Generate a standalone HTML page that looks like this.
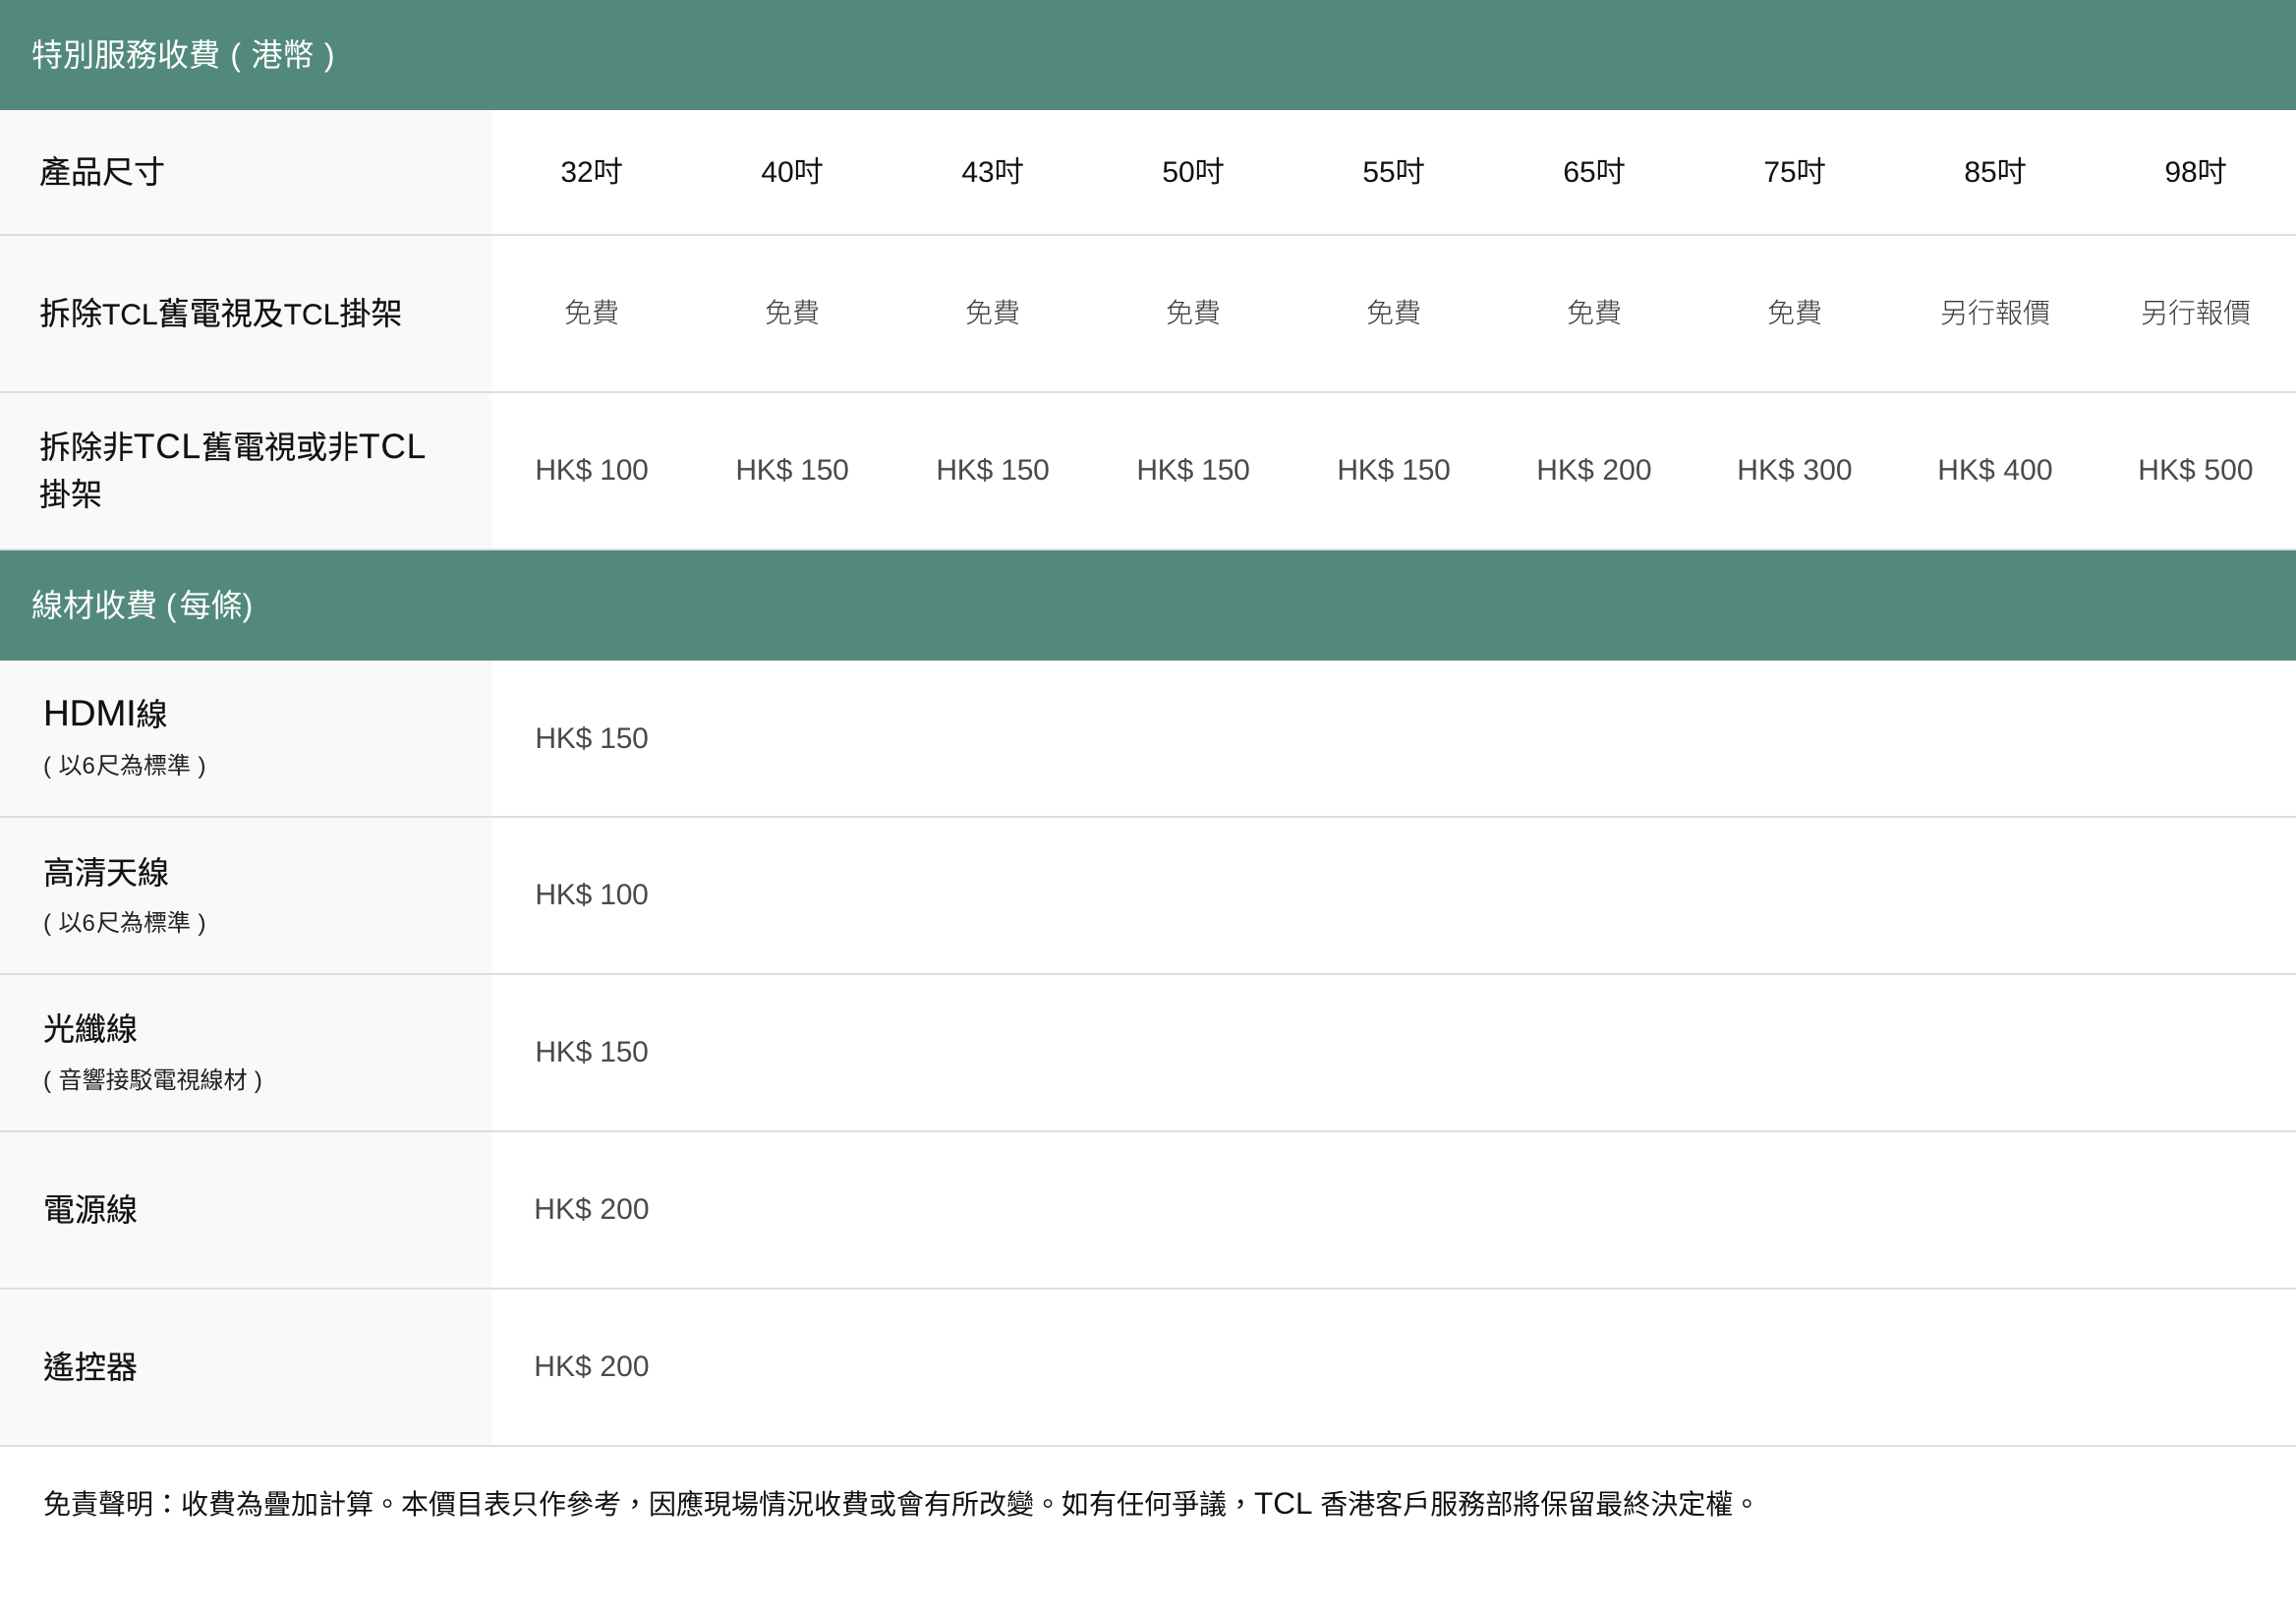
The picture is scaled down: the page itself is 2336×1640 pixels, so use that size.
<!DOCTYPE html>
<html lang="zh-Hant">
<head>
<meta charset="utf-8">
<title>特別服務收費</title>
<style>
html,body{margin:0;padding:0;background:#fff;}
body{width:2336px;height:1640px;overflow:hidden;position:relative;font-family:"Liberation Sans","Noto Sans CJK TC",sans-serif;color:#111;}
.band{position:absolute;left:0;width:2336px;height:112px;background:#52897b;color:#fff;font-size:32px;line-height:112px;}
.band span{position:absolute;left:32px;top:0;white-space:nowrap;}
.band b{font-weight:400;}
.side{position:absolute;left:0;width:500px;background:#f9f9f9;}
.line{position:absolute;left:0;width:2336px;height:2px;background:#dedede;}
.h{position:absolute;white-space:nowrap;font-size:32px;color:#111;line-height:48px;-webkit-text-stroke:.2px #111;}
.s{position:absolute;white-space:nowrap;font-size:24px;color:#222;line-height:36px;word-spacing:.8px;}
.c{position:absolute;width:204px;text-align:center;white-space:nowrap;}
.sz{font-size:30px;line-height:40px;color:#111;}
.fr{font-size:28px;line-height:40px;color:#3a3a3a;font-weight:300;}
.pr{font-size:30px;line-height:40px;color:#4a4a4a;font-weight:300;letter-spacing:-.2px;}
.w{letter-spacing:.1px;}
.foot{position:absolute;left:44px;top:1511px;font-size:28px;line-height:40px;color:#111;white-space:nowrap;}
.t1,.t2,.t3,.t4{line-height:0;}
.t1{font-size:30px;}
.t2{font-size:35px;letter-spacing:1px;}
.t3{font-size:31.5px;}
.t4{font-size:37px;}
</style>
</head>
<body>
<div class="band" style="top:0"><span style="word-spacing:1.5px">特別服務收費 ( 港幣 )</span></div>

<div class="side" style="top:112px;height:448px"></div>
<div class="line" style="top:238px"></div>
<div class="line" style="top:398px"></div>
<div class="line" style="top:558px"></div>

<div class="h" style="left:40px;top:151px">產品尺寸</div>
<div class="h" style="left:40px;top:295px">拆除<span class="t1">TCL</span>舊電視及<span class="t1">TCL</span>掛架</div>
<div class="h" style="left:40px;top:431px">拆除非<span class="t2">TCL</span>舊電視或非<span class="t2">TCL</span><br>掛架</div>

<div class="c sz" style="left:500px;top:156px">32吋</div>
<div class="c sz" style="left:704px;top:156px">40吋</div>
<div class="c sz" style="left:908px;top:156px">43吋</div>
<div class="c sz" style="left:1112px;top:156px">50吋</div>
<div class="c sz" style="left:1316px;top:156px">55吋</div>
<div class="c sz" style="left:1520px;top:156px">65吋</div>
<div class="c sz" style="left:1724px;top:156px">75吋</div>
<div class="c sz" style="left:1928px;top:156px">85吋</div>
<div class="c sz" style="left:2132px;top:156px">98吋</div>

<div class="c fr" style="left:500px;top:299px">免費</div>
<div class="c fr" style="left:704px;top:299px">免費</div>
<div class="c fr" style="left:908px;top:299px">免費</div>
<div class="c fr" style="left:1112px;top:299px">免費</div>
<div class="c fr" style="left:1316px;top:299px">免費</div>
<div class="c fr" style="left:1520px;top:299px">免費</div>
<div class="c fr" style="left:1724px;top:299px">免費</div>
<div class="c fr" style="left:1928px;top:299px">另行報價</div>
<div class="c fr" style="left:2132px;top:299px">另行報價</div>

<div class="c pr" style="left:500px;top:459px">HK$ 100</div>
<div class="c pr" style="left:704px;top:459px">HK$ 150</div>
<div class="c pr" style="left:908px;top:459px">HK$ 150</div>
<div class="c pr" style="left:1112px;top:459px">HK$ 150</div>
<div class="c pr" style="left:1316px;top:459px">HK$ 150</div>
<div class="c pr w" style="left:1520px;top:459px">HK$ 200</div>
<div class="c pr w" style="left:1724px;top:459px">HK$ 300</div>
<div class="c pr w" style="left:1928px;top:459px">HK$ 400</div>
<div class="c pr w" style="left:2132px;top:459px">HK$ 500</div>

<div class="band" style="top:560px"><span>線材收費 <b style="letter-spacing:3px">(</b>每條)</span></div>

<div class="side" style="top:672px;height:798px"></div>
<div class="line" style="top:830px"></div>
<div class="line" style="top:990px"></div>
<div class="line" style="top:1150px"></div>
<div class="line" style="top:1310px"></div>
<div class="line" style="top:1470px"></div>

<div class="h" style="left:44px;top:703px"><span class="t4">HDMI</span>線</div>
<div class="s" style="left:44px;top:762px">( 以<span style="letter-spacing:1.2px">6</span>尺為標準 )</div>
<div class="c pr" style="left:500px;top:732px">HK$ 150</div>

<div class="h" style="left:44px;top:864px">高清天線</div>
<div class="s" style="left:44px;top:922px">( 以<span style="letter-spacing:1.2px">6</span>尺為標準 )</div>
<div class="c pr" style="left:500px;top:891px">HK$ 100</div>

<div class="h" style="left:44px;top:1023px">光纖線</div>
<div class="s" style="left:44px;top:1082px">( 音響接駁電視線材 )</div>
<div class="c pr" style="left:500px;top:1051px">HK$ 150</div>

<div class="h" style="left:44px;top:1207px">電源線</div>
<div class="c pr w" style="left:500px;top:1211px">HK$ 200</div>

<div class="h" style="left:44px;top:1367px">遙控器</div>
<div class="c pr w" style="left:500px;top:1371px">HK$ 200</div>

<div class="foot">免責聲明：收費為疊加計算。本價目表只作參考，因應現場情況收費或會有所改變。如有任何爭議，<span class="t3">TCL</span> 香港客戶服務部將保留最終決定權。</div>
</body>
</html>
